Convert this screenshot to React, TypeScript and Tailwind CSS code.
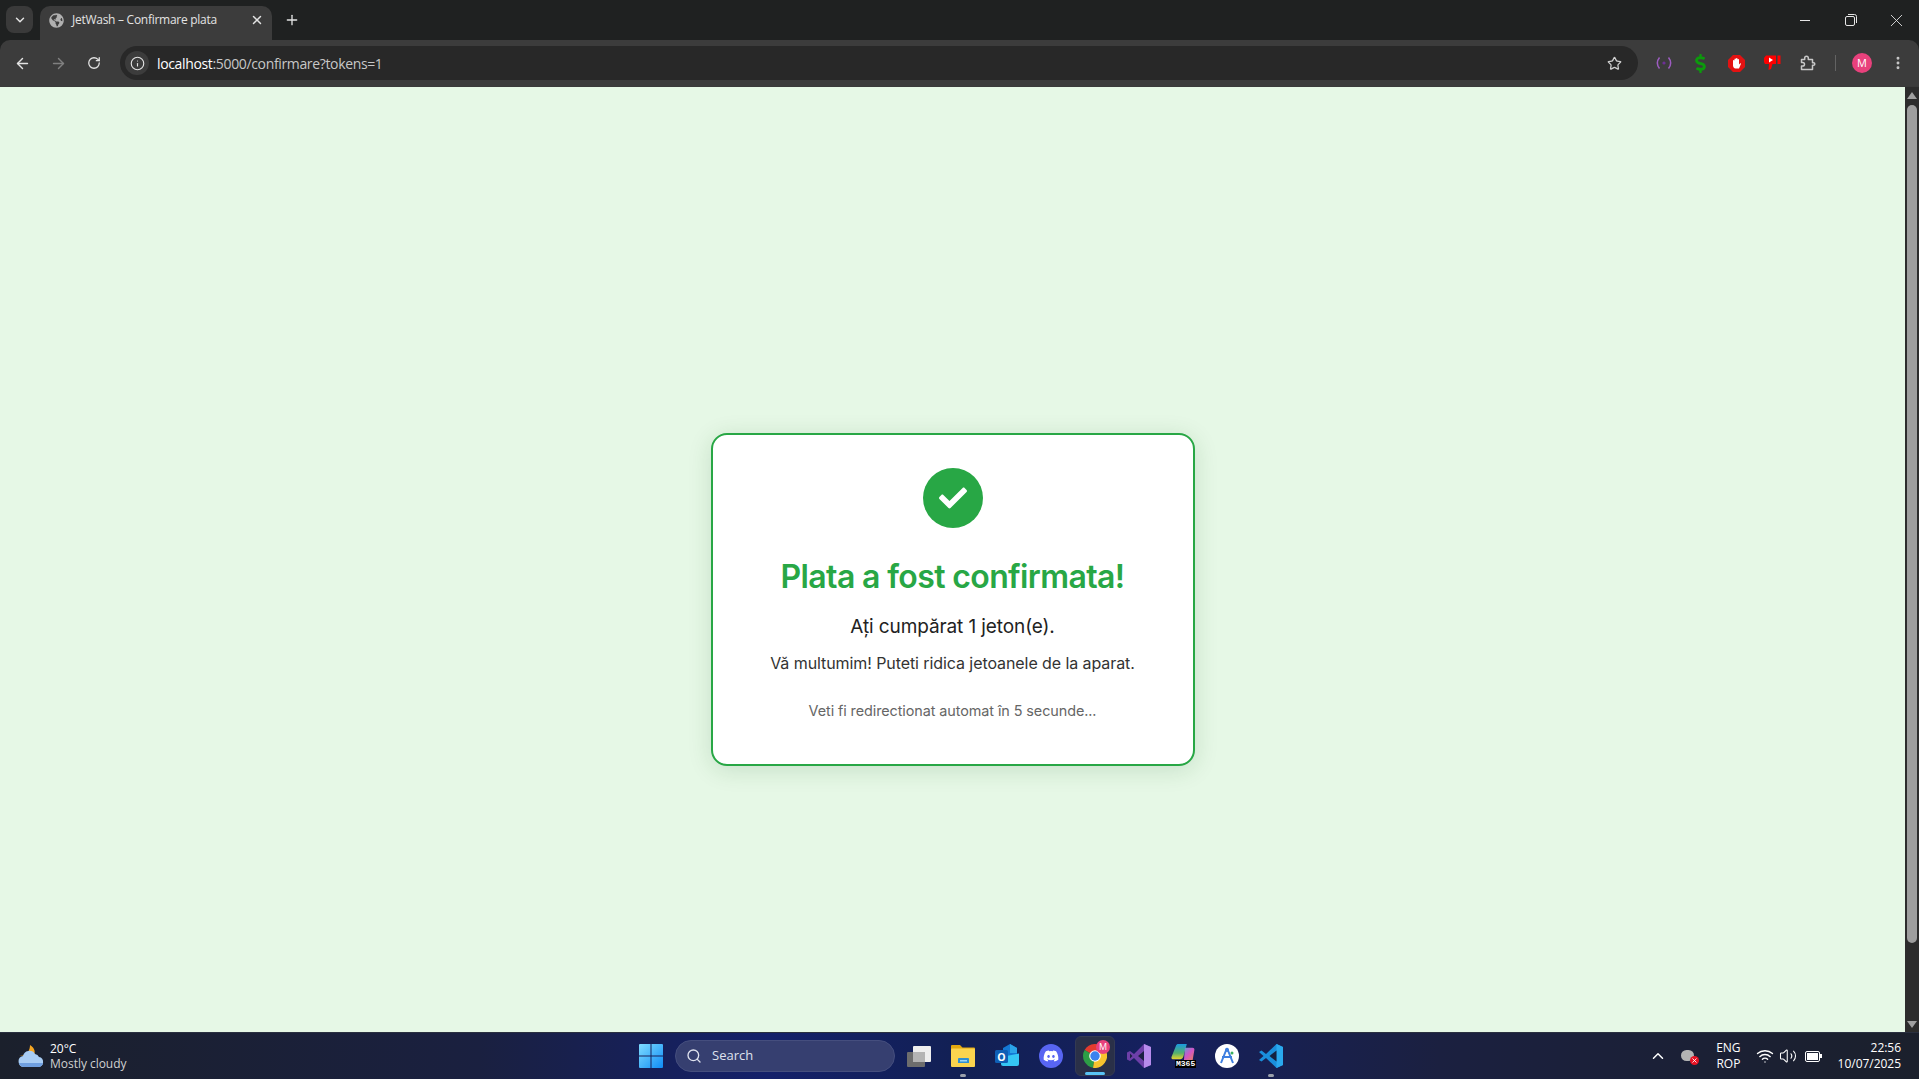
import React from 'react';
import { ArrowLeft, ArrowRight, ChevronDown, ChevronUp, EllipsisVertical, Info, Plus, RotateCw, Search, Star, Volume2, Wifi, X } from 'lucide-react';
import { FaCheck, FaGlobeAmericas, FaDiscord, FaDollarSign } from 'react-icons/fa';

const uiFont = "font-['Open_Sans','Noto_Sans',sans-serif]";

const RestoreIcon = () => (
  <svg width="12" height="12" viewBox="0 0 12 12" fill="none" stroke="#e6e6e6" strokeWidth="1">
    <rect x="0.5" y="2.5" width="9" height="9" rx="1.5" />
    <path d="M3 .5h6.5a2 2 0 0 1 2 2V9" />
  </svg>
);

const ExtensionsIcon = () => (
  <svg width="16" height="16" viewBox="0 0 16 16" fill="none" stroke="#c8c8c8" strokeWidth="1.5" strokeLinejoin="round">
    <path d="M1.500 4.500h3.200V3a1.800 1.800 0 0 1 3.600 0v1.500h4.200v3.200h1a1.300 1.300 0 0 1 0 2.600h-1v4.200h-11v-3.500h1.200a1.800 1.800 0 0 0 0-3.600H1.500z" />
  </svg>
);

const BroadcastIcon = () => (
  <svg width="16" height="16" viewBox="0 0 16 16" fill="none" stroke="#9d5cc0" strokeWidth="1.5">
    <path d="M3.500 2.500c-2.600 3.300-2.600 7.700 0 11M12.500 2.500c2.600 3.300 2.600 7.700 0 11" />
    <circle cx="8" cy="8" r="1.600" fill="#6e2f96" stroke="none" />
  </svg>
);

const StopHandIcon = () => (
  <svg width="17" height="17" viewBox="0 0 17 17">
    <path d="M5 0h7l5 5v7l-5 5H5l-5-5V5z" fill="#e31212" />
    <path d="M5 9V5.500a.8.8 0 0 1 1.500 0V4a.8.8 0 0 1 1.500 0v-.4a.8.8 0 0 1 1.500 0V4.500a.8.8 0 0 1 1.500 0v5l1-1c.6-.4 1.200.2.8.8L11 13.500H7.500C6 13.500 5 12 5 10.500z" fill="#fff" />
  </svg>
);

const DislikeIcon = () => (
  <svg width="17" height="16" viewBox="0 0 17 16">
    <path d="M0 3l2-2.500h10v8.500H8.500L7 14 4.500 15l.5-6H1L0 7z" fill="#f00" />
    <path d="M5 2.500l4 2.500-4 2.500z" fill="#fff" />
    <rect x="13.500" y="0.500" width="3" height="8.500" fill="#f00" />
  </svg>
);

const WeatherIcon = () => (
  <svg width="26" height="24" viewBox="0 0 26 24">
    <path d="M12 1c5 3 6 8 3 11H1c3 0 7-1 9-4 1.500-2 2-5 2-7z" fill="#f5a623" />
    <path d="M6 23a5.500 5.500 0 0 1-1-10.900A6.500 6.500 0 0 1 17 10a5 5 0 0 1 4 3.100A5 5 0 0 1 20.500 23z" fill="#a9cdf4" />
    <path d="M6 23a5.500 5.500 0 0 1-5-4h24a5 5 0 0 1-4.500 4z" fill="#6f9fe0" />
  </svg>
);

const StartIcon = () => (
  <svg width="24" height="24" viewBox="0 0 24 24">
    <defs>
      <linearGradient id="startFill" x1="0" y1="0" x2="1" y2="1">
        <stop offset="0" stopColor="#7fdcff" />
        <stop offset="1" stopColor="#0f8cf5" />
      </linearGradient>
    </defs>
    <path d="M1 0h10.500v11.500H0V1a1 1 0 0 1 1-1zM12.500 0H23a1 1 0 0 1 1 1v10.500H12.500zM0 12.500h11.500V24H1a1 1 0 0 1-1-1zM12.500 12.500H24V23a1 1 0 0 1-1 1H12.500z" fill="url(#startFill)" />
  </svg>
);

const TaskViewIcon = () => (
  <svg width="24" height="21" viewBox="0 0 24 21">
    <rect x="6" y="0" width="18" height="16" rx="1" fill="#eeeeee" />
    <rect x="0" y="6" width="18" height="15" rx="1" fill="#6d6d6d" />
    <rect x="6" y="6" width="12" height="10" fill="#b4b4b4" />
  </svg>
);

const ExplorerIcon = () => (
  <svg width="24" height="22" viewBox="0 0 24 22">
    <path d="M1 0h8l2.500 2.500H23a1 1 0 0 1 1 1V6H0V1a1 1 0 0 1 1-1z" fill="#e3a80f" />
    <rect x="0" y="3.500" width="24" height="18.500" rx="1" fill="#fbd44e" />
    <path d="M8 13h9a1 1 0 0 1 1 1v4H7v-4a1 1 0 0 1 1-1z" fill="#2f8fd1" />
    <rect x="9" y="15" width="7" height="1.500" fill="#9fd5f3" />
  </svg>
);

const OutlookIcon = () => (
  <svg width="24" height="24" viewBox="0 0 24 24">
    <path d="M8 4l7-4 7 4v8H8z" fill="#1478d4" />
    <path d="M15 0l7 4v5h-7z" fill="#2ba3e8" />
    <path d="M6 13l18-3.500V20a2 2 0 0 1-2 2H8a2 2 0 0 1-2-2z" fill="#35c6f4" />
    <rect x="0" y="6" width="13" height="13" rx="1.500" fill="#0f5fb5" />
    <text x="6.500" y="16.500" textAnchor="middle" fontSize="10.500" fontWeight="700" fill="#fff" fontFamily="Open Sans, sans-serif">O</text>
  </svg>
);

const ChromeIcon = () => (
  <svg width="24" height="24" viewBox="0 0 24 24">
    <path d="M12 12L1.600 6A12 12 0 0 1 22.400 6z" fill="#e33b2e" />
    <path d="M12 12L1.600 6A12 12 0 0 0 10 23.800z" fill="#2d9e46" />
    <path d="M12 12h0l10.400-6A12 12 0 0 1 10 23.800z" fill="#f7c32e" />
    <circle cx="12" cy="12" r="5.800" fill="#fff" />
    <circle cx="12" cy="12" r="4.700" fill="#3b82ee" />
  </svg>
);

const VisualStudioIcon = () => (
  <svg width="24" height="24" viewBox="0 0 24 24">
    <path d="M17 0l7 3v18l-7 3-10-10-4 3-3-1.500v-7L3 7l4 3z" fill="#6d3fa8" />
    <path d="M17 0l7 3v18l-7 3z" fill="#b78bec" />
    <path d="M17 7l-6 5 6 5zM3 9.500v5L5.500 12z" fill="#1b2143" />
  </svg>
);

const CopilotIcon = () => (
  <div className="relative w-6 h-6">
    <svg width="24" height="19" viewBox="0 0 24 20">
      <defs>
        <linearGradient id="copilotLeft" x1="0" y1="0" x2="0" y2="1">
          <stop offset="0" stopColor="#1a9be0" />
          <stop offset="0.600" stopColor="#55b06c" />
          <stop offset="1" stopColor="#e6d32e" />
        </linearGradient>
        <linearGradient id="copilotRight" x1="0" y1="0" x2="1" y2="1">
          <stop offset="0" stopColor="#3cb4d8" />
          <stop offset="0.500" stopColor="#d055c8" />
          <stop offset="1" stopColor="#f08a3c" />
        </linearGradient>
      </defs>
      <path d="M7 0h9l-3.500 13C12 15 10.500 16 9 16H1a2 2 0 0 1-1-2.500L4.500 2C5 .7 6 0 7 0z" fill="url(#copilotLeft)" />
      <path d="M14 4h8c1.500 0 2 1 2 2l-2 12c-.3 1-1 2-3 2H9c2 0 3.500-1 4-3z" fill="url(#copilotRight)" />
    </svg>
    <span className="absolute left-[4px] bottom-0 bg-black text-white text-[8px] leading-[8px] px-[1px] font-['Liberation_Mono',monospace] font-bold">M365</span>
  </div>
);

const ArcIcon = () => (
  <div className="w-6 h-6 rounded-full bg-white flex items-center justify-center">
    <svg width="16" height="18" viewBox="0 0 16 18" fill="none" stroke="#3f7fe0" strokeWidth="2">
      <path d="M8 1L2 16M8 1l6 15M3 10h10" />
      <circle cx="8" cy="3" r="2" fill="#3f7fe0" stroke="none" />
      <circle cx="13" cy="6" r="1.500" fill="#3cae5f" stroke="none" />
    </svg>
  </div>
);

const VSCodeIcon = () => (
  <svg width="24" height="24" viewBox="0 0 24 24">
    <path d="M17.500 0L24 3v18l-6.500 3L7 14l-4.500 3.500L0 16l4.500-4L0 8l2.500-1.500L7 10z" fill="#1a8fdc" />
    <path d="M17.500 0L24 3v18l-6.500 3z" fill="#2aa9ee" />
    <path d="M17.500 6.500L10.500 12l7 5.500z" fill="#14213f" />
  </svg>
);

const TaskbarApp = (props: { children: React.ReactNode; running?: boolean }) => (
  <div className="relative w-11 h-10 flex items-center justify-center">
    {props.children}
    {props.running && <span className="absolute bottom-[-1px] w-[6px] h-[3px] rounded-full bg-[#9aa0ab]" />}
  </div>
);

export default function App() {
  return (
    <div className={`w-[1919px] h-[1079px] overflow-hidden flex flex-col bg-[#1f2121] ${uiFont}`}>
      {/* tab strip */}
      <div className="h-10 shrink-0 bg-[#1f2121] flex items-end text-[#e3e3e3]">
        <div className="w-[27px] h-[27px] ml-[6px] mb-[7px] rounded-lg bg-[#3a3a3a] flex items-center justify-center">
          <ChevronDown size={14} strokeWidth={2.5} />
        </div>
        <div className="w-[232px] h-[34px] ml-[7px] rounded-t-[10px] bg-[#3c3c3c] flex items-center pl-[9px] pr-2 pb-[6px]">
          <FaGlobeAmericas size={15} className="text-[#b0b0b0]" />
          <span className="ml-[8px] flex-1 text-[12px] tracking-[-0.27px] whitespace-nowrap">JetWash – Confirmare plata</span>
          <X size={14} strokeWidth={2.5} />
        </div>
        <div className="ml-[8px] mb-[8px] w-6 h-6 flex items-center justify-center">
          <Plus size={16} strokeWidth={2} />
        </div>
        <div className="ml-auto h-10 flex items-center text-[#e6e6e6]">
          <div className="w-[46px] flex justify-center"><div className="w-[10px] h-px bg-[#e6e6e6]" /></div>
          <div className="w-[46px] flex justify-center"><RestoreIcon /></div>
          <div className="w-[46px] mr-[-1px] flex justify-center pr-[1px]"><X size={21} strokeWidth={1} /></div>
        </div>
      </div>

      {/* toolbar */}
      <div className="h-[47px] shrink-0 bg-[#3c3c3c] rounded-t-[10px] flex items-center text-[#e3e3e3] border-b border-[#3a3a3a]">
        <div className="ml-[12px] w-5 flex justify-center"><ArrowLeft size={17} strokeWidth={2} /></div>
        <div className="ml-[16px] w-5 flex justify-center text-[#808080]"><ArrowRight size={17} strokeWidth={2} /></div>
        <div className="ml-[16px] w-5 flex justify-center"><RotateCw size={14} strokeWidth={2.2} /></div>
        <div className="ml-[16px] w-[1518px] h-[34px] rounded-full bg-[#282828] flex items-center pl-[5px] pr-4">
          <div className="w-6 h-6 rounded-full bg-[#3c3c3c] flex items-center justify-center"><Info size={15} strokeWidth={1.8} /></div>
          <span className="ml-[8px] flex-1 text-[14px] tracking-[-0.35px]">
            <span className="text-white">localhost</span><span className="text-[#c7c7c7]">:5000/confirmare?tokens=1</span>
          </span>
          <Star size={15} strokeWidth={2} className="text-[#d0d0d0]" />
        </div>
        <div className="ml-[8px] w-[36px] flex justify-center"><BroadcastIcon /></div>
        <div className="w-[36px] flex justify-center"><FaDollarSign size={19} className="text-[#0c9a0c]" /></div>
        <div className="w-[36px] flex justify-center"><StopHandIcon /></div>
        <div className="w-[36px] flex justify-center"><DislikeIcon /></div>
        <div className="w-[36px] flex justify-center"><ExtensionsIcon /></div>
        <div className="ml-[9px] w-px h-[16px] bg-[#636363]" />
        <div className="ml-[16px] w-5 h-5 rounded-full bg-[#e8417c] text-white text-[11px] flex items-center justify-center">M</div>
        <div className="ml-[16px] w-[20px] flex justify-center"><EllipsisVertical size={16} strokeWidth={2.4} className="text-[#c8c8c8]" /></div>
      </div>

      {/* page and scrollbar */}
      <div className="flex-1 flex min-h-0">
        <main className="flex-1 bg-[#e6f8e6] flex justify-center pt-[346px] font-['Inter','Noto_Sans',sans-serif]">
          <div className="w-[484px] h-[333px] bg-white border-2 border-[#28a745] rounded-2xl shadow-[0_4px_24px_rgba(0,80,20,0.14)] flex flex-col items-center pt-[33px]">
            <div className="w-[60px] h-[60px] rounded-full bg-[#28a745] flex items-center justify-center text-white">
              <FaCheck size={28} />
            </div>
            <h1 className="mt-[29px] text-[32px] leading-[40px] font-semibold text-[#28a745] tracking-[-0.62px]">Plata a fost confirmata!</h1>
            <p className="mt-[18px] text-[19px] leading-[24px] tracking-[-0.1px] text-[#222222]">Ați cumpărat 1 jeton(e).</p>
            <p className="mt-[14px] text-[16px] leading-[20px] tracking-[-0.08px] text-[#333333]">Vă multumim! Puteti ridica jetoanele de la aparat.</p>
            <p className="mt-[29px] text-[14.4px] leading-[18px] tracking-[-0.08px] text-[#666666]">Veti fi redirectionat automat în 5 secunde...</p>
          </div>
        </main>
        <aside className="w-[14px] bg-[#2c2c2c] flex flex-col items-center pt-[5px] pb-[4px]">
          <div className="w-0 h-0 border-x-[5px] border-x-transparent border-b-[7px] border-b-[#a0a0a0]" />
          <div className="mt-[6px] w-[10px] h-[838px] rounded-full bg-[#9e9e9e]" />
          <div className="mt-auto w-0 h-0 border-x-[5px] border-x-transparent border-t-[7px] border-t-[#a0a0a0]" />
        </aside>
      </div>

      {/* taskbar */}
      <footer className="h-[47px] shrink-0 flex items-center bg-[linear-gradient(90deg,#1b202c_0%,#1a2040_25%,#14206a_40%,#122054_50%,#15205e_60%,#1b2040_75%,#1b202c_100%)] border-t border-[#2a3040] text-white">
        <div className="w-[639px] shrink-0 flex items-center pl-[18px]">
          <WeatherIcon />
          <div className="ml-[6px] text-[12px] leading-[15.500px] tracking-[-0.03px]">
            <div>20°C</div>
            <div className="text-[#d0d0d0]">Mostly cloudy</div>
          </div>
        </div>
        <StartIcon />
        <div className="ml-[12px] w-[220px] h-[32px] rounded-full bg-[#363f70] border border-[#454e7e] flex items-center pl-[10px] text-[#dfe2ee]">
          <Search size={16} strokeWidth={2} />
          <span className="ml-[10px] text-[13px]">Search</span>
        </div>
        <div className="ml-[2px]"><TaskbarApp><TaskViewIcon /></TaskbarApp></div>
        <TaskbarApp running><ExplorerIcon /></TaskbarApp>
        <TaskbarApp><OutlookIcon /></TaskbarApp>
        <TaskbarApp><div className="w-6 h-6 rounded-full bg-[#5865f2] flex items-center justify-center"><FaDiscord size={16} /></div></TaskbarApp>
        <div className="relative w-11 h-10 flex items-center justify-center">
          <div className="absolute left-[2px] w-10 h-10 rounded-md bg-[#2a3048] border border-[#343a52]" />
          <div className="relative"><ChromeIcon /></div>
          <span className="absolute right-[7px] top-[4px] w-[14px] h-[14px] rounded-full bg-[#e8417c] text-[9px] flex items-center justify-center">M</span>
          <span className="absolute bottom-[1px] left-[12px] w-5 h-[3px] rounded-full bg-[#59c3f5]" />
        </div>
        <TaskbarApp><VisualStudioIcon /></TaskbarApp>
        <TaskbarApp><CopilotIcon /></TaskbarApp>
        <TaskbarApp><ArcIcon /></TaskbarApp>
        <TaskbarApp running><VSCodeIcon /></TaskbarApp>

        <div className="ml-auto flex items-center pr-[18px]">
          <ChevronUp size={18} strokeWidth={2} />
          <div className="relative ml-[14px] w-[18px] h-[14px]">
            <div className="absolute left-0 top-[1px] w-[13px] h-[11px] rounded-full bg-[#b4b4b4]" />
            <div className="absolute right-0 bottom-[-2px] w-[9px] h-[9px] rounded-full bg-[#e81224] text-white flex items-center justify-center"><X size={7} strokeWidth={3} /></div>
          </div>
          <div className="ml-[17px] text-[12px] leading-[16px] text-center"><div>ENG</div><div>ROP</div></div>
          <div className="ml-[15px]"><Wifi size={18} strokeWidth={1.8} /></div>
          <div className="ml-[5px]"><Volume2 size={18} strokeWidth={1.4} /></div>
          <div className="ml-[8px] flex items-center">
            <div className="w-[15px] h-[11px] rounded-[2px] border border-white p-[1px]"><div className="w-[11px] h-full bg-white" /></div>
            <div className="w-[2px] h-[4px] bg-white" />
          </div>
          <div className="ml-[16px] text-[12px] leading-[16px] text-right tracking-[-0.03px]"><div>22:56</div><div>10/07/2025</div></div>
        </div>
      </footer>
    </div>
  );
}
